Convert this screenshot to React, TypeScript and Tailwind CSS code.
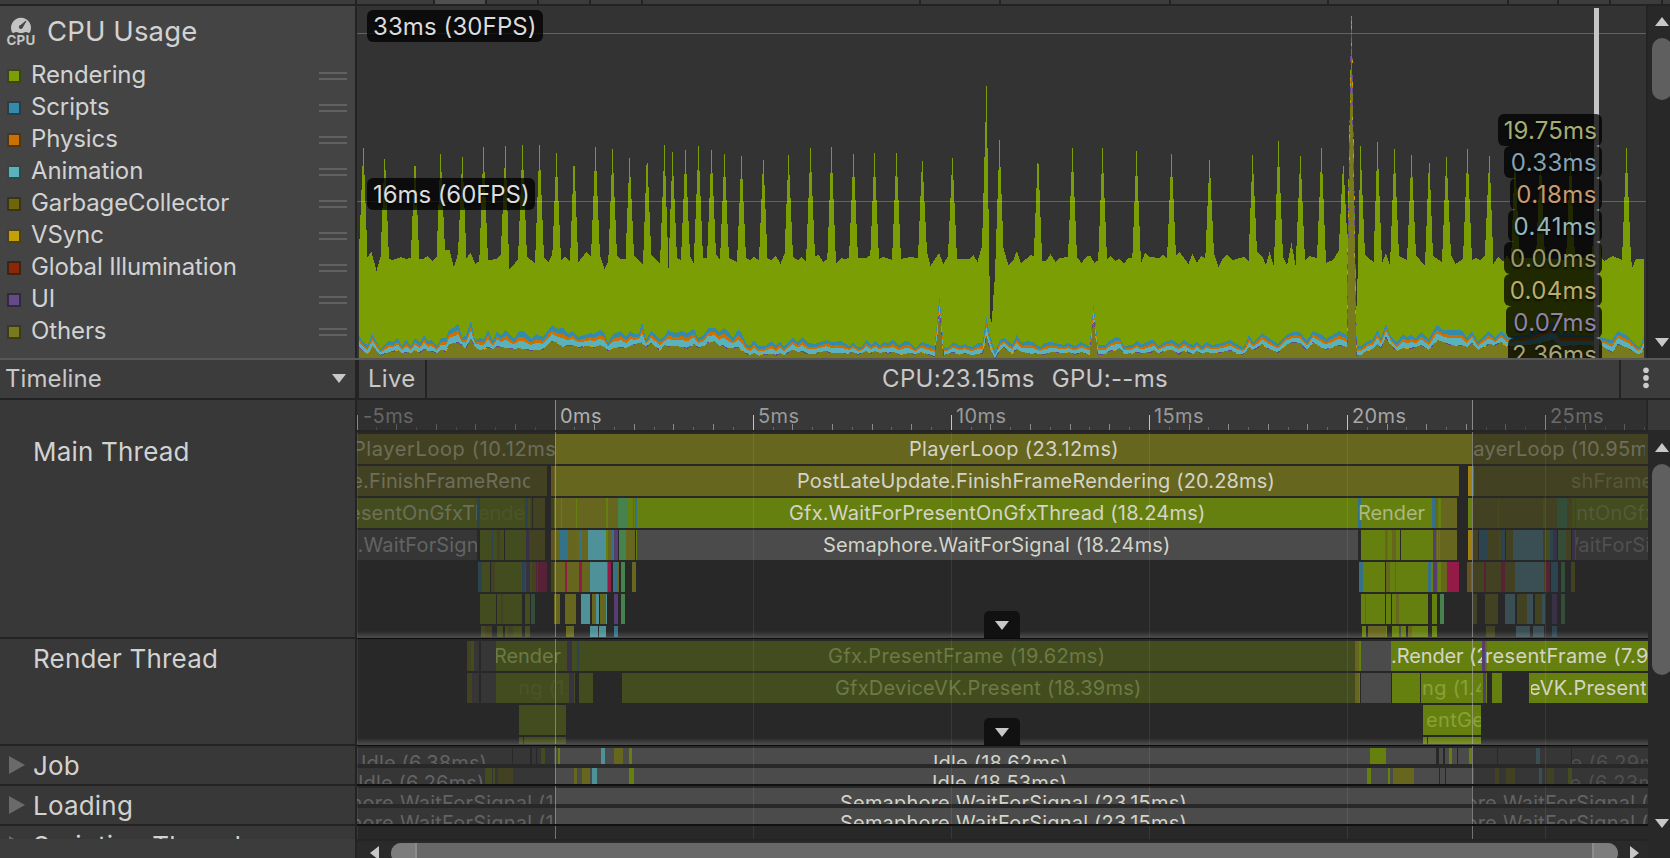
import React from "react";

const FONT = "font-['Inter','Liberation_Sans',sans-serif]";

/* ---------- Palette ---------- */

const FILL: Record<string, string> = {
  o: "bg-[#66661f]",
  O: "bg-[#424222]",
  g: "bg-[#66800f]",
  G: "bg-[#434c1e]",
  s: "bg-[#4b4b4b]",
  S: "bg-[#363636]",
  b: "bg-[#337288]",
  B: "bg-[#2b444f]",
  c: "bg-[#4f9198]",
  C: "bg-[#3a4f54]",
  p: "bg-[#563f70]",
  P: "bg-[#393146]",
  t: "bg-[#46824d]",
  T: "bg-[#344d38]",
  m: "bg-[#941b48]",
  M: "bg-[#582236]",
  y: "bg-[#a0810f]",
  n: "bg-[#665220]",
  k: "bg-[#282828]",
};

const TONE: Record<string, string> = {
  bright: "text-[#d4d4c8]",
  mid: "text-[#aab880]",
  dim: "text-[#6e6e5a]",
  dimGray: "text-[#636363]",
  olive: "text-[#6c7a44]",
  soft: "text-[#8aa03c]",
  faint: "text-[#57583c]",
  faintGray: "text-[#505050]",
  ghost: "text-[#4b5427]",
};

const TRACK: Record<string, string> = {
  none: "tracking-[-0.1px]",
  tight: "tracking-[0.15px]",
  snug: "tracking-[0.2px]",
  normal: "tracking-[0.34px]",
  wide: "tracking-[0.6px]",
};

type Bar = [number, number, string];
type Label = { x: number; from: number; to: number; text: string; tone: string; track?: string };
type LaneData = { bars: Bar[]; labels?: Label[] };

/* ---------- Timeline data ---------- */

const LEFT = 357;

const mainLanes: LaneData[] = [
  {
    bars: [[357, 555, "O"], [555, 1472, "o"], [1472, 1648, "O"]],
    labels: [
      { x: 353, from: 357, to: 555, text: "PlayerLoop (10.12ms)", tone: "dim", track: "wide" },
      { x: 909, from: 555, to: 1472, text: "PlayerLoop (23.12ms)", tone: "bright" },
      { x: 1455, from: 1472, to: 1645, text: "PlayerLoop (10.95ms)", tone: "dim" },
    ],
  },
  {
    bars: [[357, 547, "O"], [551, 554, "n"], [554, 1459, "o"], [1468, 1472, "y"], [1472, 1474, "b"], [1474, 1648, "O"]],
    labels: [
      { x: 210, from: 357, to: 530, text: "PostLateUpdate.FinishFrameRendering (8.63ms)", tone: "dim", track: "tight" },
      { x: 797, from: 555, to: 1459, text: "PostLateUpdate.FinishFrameRendering (20.28ms)", tone: "bright", track: "tight" },
      { x: 1378, from: 1571, to: 1648, text: "PostLateUpdate.FinishFrameRendering (9.10ms)", tone: "faint", track: "tight" },
    ],
  },
  {
    bars: [
      [357, 477, "G"], [477, 480, "B"], [480, 525, "G"], [525, 528, "B"], [528, 530, "G"], [530, 532, "O"],
      [533, 545, "O"], [551, 554, "O"], [554, 618, "o"], [561, 562, "t"], [576, 577, "g"], [606, 608, "g"],
      [618, 627, "t"], [627, 635, "g"], [633, 634, "o"], [635, 636, "o"], [636, 637, "b"], [637, 1358, "g"],
      [1358, 1361, "b"], [1361, 1432, "g"], [1432, 1435, "b"], [1435, 1438, "o"], [1438, 1441, "g"],
      [1441, 1457, "o"], [1468, 1472, "g"], [1472, 1557, "O"], [1498, 1499, "G"], [1505, 1506, "B"], [1543, 1545, "G"],
      [1557, 1567, "T"], [1567, 1572, "O"], [1572, 1648, "G"], [1575, 1576, "B"],
    ],
    labels: [
      { x: 216, from: 357, to: 477, text: "Gfx.WaitForPresentOnGfxThread (6.40ms)", tone: "dim", track: "tight" },
      { x: 478, from: 480, to: 525, text: "ender", tone: "ghost", track: "none" },
      { x: 789, from: 637, to: 1358, text: "Gfx.WaitForPresentOnGfxThread (18.24ms)", tone: "bright", track: "snug" },
      { x: 1358, from: 1358, to: 1432, text: "Render", tone: "mid", track: "none" },
      { x: 1408, from: 1575, to: 1648, text: "Gfx.WaitForPresentOnGfxThread (7.20ms)", tone: "faint", track: "snug" },
    ],
  },
  {
    bars: [
      [357, 477, "S"], [480, 504, "G"], [492, 493, "B"], [497, 500, "O"], [505, 526, "G"], [526, 529, "P"],
      [529, 545, "O"], [551, 554, "n"], [554, 635, "o"], [560, 568, "b"], [577, 578, "b"], [579, 582, "b"],
      [588, 606, "c"], [606, 608, "g"], [611, 614, "b"], [614, 618, "p"], [618, 619, "k"], [619, 626, "t"],
      [636, 637, "g"], [637, 1358, "s"], [1361, 1385, "g"], [1385, 1387, "o"], [1387, 1388, "b"], [1388, 1400, "g"],
      [1392, 1396, "o"], [1401, 1433, "g"], [1433, 1436, "p"], [1436, 1457, "o"], [1437, 1438, "g"], [1439, 1440, "g"],
      [1468, 1472, "y"], [1472, 1478, "O"], [1479, 1487, "B"], [1487, 1501, "O"], [1499, 1500, "G"], [1501, 1505, "B"],
      [1506, 1513, "O"], [1513, 1543, "C"], [1543, 1545, "O"], [1545, 1550, "G"], [1550, 1553, "B"], [1553, 1557, "P"],
      [1558, 1566, "T"], [1566, 1571, "O"], [1572, 1575, "P"], [1575, 1576, "G"], [1576, 1648, "S"],
    ],
    labels: [
      { x: 248, from: 357, to: 477, text: "Semaphore.WaitForSignal (6.40ms)", tone: "dimGray", track: "tight" },
      { x: 823, from: 637, to: 1358, text: "Semaphore.WaitForSignal (18.24ms)", tone: "bright", track: "tight" },
      { x: 1444, from: 1576, to: 1648, text: "Semaphore.WaitForSignal (7.20ms)", tone: "faintGray", track: "tight" },
    ],
  },
  {
    bars: [
      [478, 482, "B"], [482, 490, "G"], [491, 495, "O"], [495, 522, "G"], [522, 525, "B"], [525, 532, "G"],
      [526, 530, "P"], [532, 536, "O"], [536, 547, "M"], [537, 538, "O"], [551, 554, "O"], [554, 590, "o"],
      [565, 567, "m"], [579, 582, "m"], [590, 607, "c"], [607, 608, "o"], [608, 611, "m"], [613, 618, "b"],
      [618, 619, "o"], [621, 625, "t"], [632, 636, "o"], [1359, 1363, "b"], [1363, 1385, "g"], [1386, 1390, "o"],
      [1390, 1428, "g"], [1395, 1396, "o"], [1428, 1431, "b"], [1431, 1433, "g"], [1433, 1437, "p"], [1437, 1438, "b"],
      [1438, 1441, "g"], [1441, 1447, "o"], [1447, 1459, "m"], [1467, 1471, "n"], [1471, 1472, "b"], [1473, 1515, "O"],
      [1484, 1486, "M"], [1501, 1505, "M"], [1515, 1544, "C"], [1544, 1546, "O"], [1546, 1550, "M"], [1551, 1557, "B"],
      [1557, 1558, "O"], [1561, 1565, "T"], [1571, 1575, "O"],
    ],
  },
  {
    bars: [
      [480, 496, "G"], [497, 522, "G"], [501, 503, "O"], [525, 530, "G"], [531, 535, "T"], [554, 560, "o"],
      [565, 576, "o"], [581, 590, "c"], [592, 596, "o"], [596, 599, "c"], [600, 606, "o"], [606, 607, "c"],
      [614, 618, "p"], [621, 625, "t"], [1361, 1385, "g"], [1365, 1366, "o"], [1386, 1391, "g"], [1392, 1428, "g"],
      [1396, 1399, "o"], [1432, 1437, "g"], [1440, 1444, "t"], [1473, 1477, "O"], [1485, 1498, "O"], [1505, 1515, "C"],
      [1517, 1527, "O"], [1527, 1533, "C"], [1535, 1542, "O"], [1542, 1545, "C"], [1552, 1557, "P"], [1561, 1565, "T"],
    ],
  },
  {
    bars: [
      [481, 485, "G"], [485, 492, "O"], [497, 503, "G"], [505, 522, "G"], [508, 513, "O"], [525, 530, "G"],
      [566, 574, "o"], [590, 598, "c"], [599, 606, "c"], [614, 618, "b"], [1362, 1366, "g"], [1368, 1386, "o"],
      [1386, 1387, "g"], [1392, 1399, "g"], [1399, 1401, "s"], [1401, 1406, "g"], [1408, 1412, "o"], [1412, 1428, "g"],
      [1432, 1437, "g"], [1486, 1495, "O"], [1516, 1530, "C"], [1533, 1544, "C"], [1552, 1557, "B"],
    ],
  },
];

const renderLanes: LaneData[] = [
  {
    bars: [
      [467, 471, "O"], [471, 474, "G"], [474, 479, "S"], [481, 496, "S"], [496, 567, "G"], [567, 572, "P"],
      [572, 577, "G"], [577, 579, "B"], [579, 1355, "G"], [1355, 1359, "o"], [1359, 1361, "g"], [1361, 1391, "s"],
      [1391, 1482, "g"], [1482, 1485, "p"], [1485, 1487, "o"], [1487, 1648, "g"],
    ],
    labels: [
      { x: 494, from: 496, to: 567, text: "Render", tone: "olive", track: "none" },
      { x: 828, from: 579, to: 1355, text: "Gfx.PresentFrame (19.62ms)", tone: "olive" },
      { x: 1391, from: 1391, to: 1482, text: ".Render (2", tone: "bright", track: "none" },
      { x: 1485, from: 1485, to: 1648, text: "resentFrame (7.95ms)", tone: "bright" },
    ],
  },
  {
    bars: [
      [467, 472, "O"], [472, 479, "S"], [481, 496, "S"], [496, 569, "G"], [569, 574, "P"], [574, 575, "G"],
      [579, 593, "G"], [622, 1355, "G"], [1355, 1359, "o"], [1359, 1360, "g"], [1361, 1391, "s"], [1392, 1420, "g"],
      [1421, 1483, "g"], [1483, 1486, "p"], [1486, 1487, "g"], [1492, 1502, "g"], [1529, 1648, "g"],
    ],
    labels: [
      { x: 518, from: 520, to: 567, text: "ng (1.4", tone: "ghost" },
      { x: 835, from: 622, to: 1355, text: "GfxDeviceVK.Present (18.39ms)", tone: "olive", track: "snug" },
      { x: 1422, from: 1423, to: 1481, text: "ng (1.48ms)", tone: "soft" },
      { x: 1529, from: 1531, to: 1646, text: "eVK.Present", tone: "bright", track: "snug" },
    ],
  },
  {
    bars: [[519, 566, "G"], [1423, 1481, "g"]],
    labels: [{ x: 1426, from: 1427, to: 1481, text: "entGeometry", tone: "soft" }],
  },
  { bars: [[519, 523, "G"], [524, 566, "G"], [1423, 1427, "g"], [1428, 1481, "g"]] },
];

const jobLanes: LaneData[] = [
  {
    bars: [
      [357, 512, "S"], [513, 530, "S"], [532, 536, "S"], [537, 554, "S"], [541, 545, "G"], [554, 1436, "s"],
      [558, 560, "g"], [601, 605, "c"], [614, 623, "o"], [629, 632, "g"], [1370, 1386, "g"], [1439, 1443, "s"],
      [1445, 1457, "s"], [1449, 1452, "g"], [1458, 1472, "s"], [1469, 1472, "g"], [1472, 1648, "S"], [1497, 1498, "k"],
      [1536, 1540, "C"], [1571, 1572, "k"],
    ],
    labels: [
      { x: 361, from: 357, to: 512, text: "Idle (6.38ms)", tone: "dimGray", track: "tight" },
      { x: 933, from: 632, to: 1370, text: "Idle (18.62ms)", tone: "bright", track: "snug" },
      { x: 1547, from: 1572, to: 1648, text: "Idle (6.29ms)", tone: "faintGray" },
    ],
  },
  {
    bars: [
      [357, 555, "S"], [485, 492, "G"], [493, 495, "G"], [498, 513, "O"], [555, 1474, "s"], [574, 577, "o"],
      [582, 590, "o"], [592, 597, "c"], [629, 634, "g"], [1367, 1371, "g"], [1388, 1390, "g"], [1393, 1414, "o"],
      [1439, 1440, "k"], [1445, 1446, "k"], [1474, 1648, "S"], [1495, 1499, "O"], [1506, 1515, "O"], [1539, 1542, "C"],
      [1547, 1554, "O"], [1568, 1572, "G"],
    ],
    labels: [
      { x: 358, from: 357, to: 485, text: "Idle (6.26ms)", tone: "dimGray", track: "tight" },
      { x: 932, from: 634, to: 1367, text: "Idle (18.53ms)", tone: "bright", track: "snug" },
      { x: 1546, from: 1570, to: 1648, text: "Idle (6.23ms)", tone: "faintGray" },
    ],
  },
];

const loadingLane: LaneData = {
  bars: [[357, 555, "S"], [555, 1472, "s"], [1472, 1648, "S"]],
  labels: [
    { x: 284, from: 357, to: 555, text: "Semaphore.WaitForSignal (10.15ms)", tone: "dimGray", track: "snug" },
    { x: 840, from: 555, to: 1472, text: "Semaphore.WaitForSignal (23.15ms)", tone: "bright", track: "snug" },
    { x: 1387, from: 1472, to: 1648, text: "Semaphore.WaitForSignal (10.98ms)", tone: "dimGray", track: "snug" },
  ],
};

const loadingLanes = [loadingLane, loadingLane];

/* ---------- Chart data ---------- */

const frameOutline: [number, number][] = [
  [359, 251], [363.4, 145], [367.5, 257], [371.5, 252], [376.5, 271], [380.5, 257], [384.8, 152], [389, 259], [393, 260], [401, 257],
  [406, 259], [410.8, 258], [415, 154], [419.3, 259], [423, 259], [427.5, 256], [432.5, 261], [436.5, 257], [440.6, 152], [445, 250],
  [449.5, 250], [453.7, 267], [458, 254], [462.4, 154], [466.5, 258], [470.5, 253], [475.5, 264], [479.3, 261], [483.5, 147], [488, 260],
  [497, 259], [500.7, 255], [505.5, 146], [509.3, 269], [513, 266], [518, 259], [522.5, 145], [527, 257], [535, 263], [539.5, 145],
  [544, 257], [548.5, 262], [552.3, 255], [556.5, 153], [561, 260], [565, 257], [570, 262], [574, 153], [578.3, 262], [586.5, 252],
  [591, 257], [595.5, 147], [600, 256], [604.5, 269], [608.3, 261], [612.5, 149], [617, 256], [621, 259], [625.5, 259], [629.6, 156],
  [634, 255], [643, 265], [647, 151], [651.3, 255], [660, 263], [664.5, 145], [668.5, 268], [672.5, 152], [677, 258], [681, 260],
  [685.5, 150], [690, 256], [693.7, 263], [698.5, 146], [703, 258], [707, 258], [711.5, 150], [716, 254], [720, 260], [724.5, 154],
  [729, 258], [737, 262], [741.5, 156], [746, 258], [750, 260], [754, 257], [759, 260], [763.3, 155], [767.5, 258], [771, 260],
  [776, 256], [780.5, 264], [784.5, 254], [788.6, 153], [793, 257], [798, 260], [801.5, 257], [806, 262], [810.5, 148], [815, 256],
  [819, 255], [823, 262], [827.3, 259], [831.5, 147], [836, 264], [841, 258], [845, 259], [849, 258], [853.5, 154], [858, 258],
  [866, 258], [870.3, 255], [874.5, 153], [879, 259], [883, 257], [892, 260], [896.5, 153], [901, 259], [910, 257], [918, 258],
  [922.2, 155], [927, 252], [930.5, 266], [939, 253], [943.5, 264], [948, 256], [952.4, 155], [957, 259], [970, 259], [973.5, 255],
  [977.5, 262], [982, 246], [986.5, 86], [989.3, 258], [990, 317], [991.8, 323], [993.5, 295], [995, 275], [999.5, 140], [1003.5, 248],
  [1006, 257], [1008.5, 265], [1013, 261], [1016.8, 251], [1021, 263], [1026, 259], [1030, 255], [1033.8, 256], [1038, 151], [1042.2, 261],
  [1046, 261], [1050.5, 254], [1055.5, 262], [1060, 258], [1068, 257], [1072.5, 148], [1077, 257], [1081.5, 263], [1087, 256], [1090.5, 256],
  [1094.5, 263], [1098.2, 260], [1102.5, 148], [1107, 259], [1111, 256], [1115, 261], [1119, 259], [1124, 264], [1128, 258], [1132.3, 258],
  [1136.5, 151], [1141, 263], [1145, 253], [1150, 257], [1159, 258], [1163, 255], [1167, 259], [1171.5, 154], [1176, 256], [1179.5, 252],
  [1188.5, 264], [1192.5, 254], [1197, 263], [1201, 256], [1205.3, 258], [1209.6, 158], [1214, 254], [1218.5, 267], [1223, 258], [1227, 255],
  [1233, 260], [1244, 257], [1248.5, 261], [1252.6, 153], [1257, 252], [1262, 256], [1266, 265], [1269.5, 252], [1273.8, 266], [1278.5, 141],
  [1283, 257], [1287, 265], [1291.5, 243], [1295.7, 266], [1300.4, 153], [1305, 260], [1309, 256], [1317, 258], [1321.5, 148], [1326, 263],
  [1333, 260], [1338.7, 251], [1343.2, 160], [1347.4, 240], [1351.5, 16], [1356, 300], [1356.8, 310], [1360.5, 146], [1365, 255], [1373.5, 262],
  [1377.5, 142], [1382, 263], [1386, 253], [1390, 265], [1394.5, 149], [1399, 256], [1407, 260], [1411.5, 155], [1416, 255], [1425, 266],
  [1429.2, 155], [1433, 256], [1442, 262], [1446.4, 154], [1451, 255], [1455.5, 264], [1463, 259], [1467.5, 149], [1472, 260], [1476, 258],
  [1480, 260], [1484.8, 256], [1489.4, 153], [1493.5, 264], [1498, 257], [1503, 262], [1507, 255], [1511, 262], [1515, 152], [1519.5, 258],
  [1536, 258], [1540.5, 152], [1545, 258], [1566, 260], [1570.5, 152], [1575, 258], [1592, 258], [1596.5, 152], [1601, 256], [1604, 261],
  [1613, 256], [1622, 260], [1626.5, 148], [1630.8, 254], [1632, 268], [1636, 259], [1644, 259],
];

/* x, top of Scripts, top of Others */
const lowerBands: [number, number, number][] = [
  [359, 335, 347], [362, 341, 350], [367.5, 345, 354], [372.5, 334, 346], [380.5, 349, 355], [389, 341, 352], [393, 342, 351],
  [398, 338, 350], [401.5, 346, 353], [406.5, 340, 352], [411, 346, 353], [415, 338, 350], [420, 343, 352], [424, 335, 349],
  [428, 341, 351], [432, 340, 351], [437, 346, 353], [441, 338, 350], [446, 338, 351], [449, 330, 344], [455, 327, 343],
  [458, 323, 342], [462, 337, 345], [466, 336, 348], [471, 321, 338], [475, 340, 347], [480, 338, 350], [484, 339, 349],
  [488, 330, 347], [493, 341, 349], [497, 331, 346], [501, 336, 347], [505.5, 330, 347], [514, 339, 349], [519, 331, 348],
  [523, 331, 349], [531, 339, 350], [536, 334, 350], [543, 337, 349], [552, 325, 341], [558, 329, 343], [563, 327, 347],
  [568, 334, 345], [573, 331, 345], [578, 337, 347], [590, 333, 346], [594, 334, 347], [600, 330, 345], [604, 332, 347],
  [608, 343, 350], [613, 334, 348], [621, 331, 347], [626, 337, 348], [630, 331, 346], [635, 334, 344], [639, 334, 343],
  [642, 322, 342], [646, 340, 347], [651, 331, 343], [660, 339, 350], [664, 337, 345], [668, 330, 346], [675, 333, 346],
  [682, 331, 347], [687, 333, 348], [694, 329, 344], [698, 338, 347], [704, 335, 346], [708, 328, 342], [715, 328, 341],
  [719, 332, 346], [723, 328, 345], [727, 330, 348], [733, 338, 348], [738, 330, 347], [742, 334, 350], [746, 344, 353],
  [750, 346, 355], [754, 340, 353], [758, 346, 355], [765, 346, 354], [772, 341, 354], [776, 346, 355], [780, 341, 353],
  [784, 347, 355], [790, 340, 351], [793, 338, 349], [798, 342, 352], [802, 337, 351], [808, 343, 354], [815, 344, 353],
  [826, 340, 351], [832, 342, 353], [841, 341, 353], [849, 346, 353], [853, 343, 352], [858, 347, 354], [862, 347, 353],
  [866, 340, 351], [871, 345, 353], [875, 341, 351], [880, 345, 353], [884, 342, 352], [888, 343, 353], [893, 340, 352],
  [899, 345, 354], [905, 341, 354], [909, 341, 353], [915, 348, 354], [922, 342, 352], [927, 344, 354], [934.5, 346, 356],
  [937, 322, 337], [939.4, 297, 312], [941.5, 318, 332], [943.5, 346, 355], [947, 348, 354], [953, 342, 352], [960, 346, 354],
  [965, 344, 353], [972, 347, 355], [978, 343, 354], [982.5, 343, 353], [986.5, 318, 336], [990, 335, 348], [995, 352, 358],
  [1000, 340, 350], [1004, 338, 347], [1008, 341, 351], [1012, 345, 353], [1016.7, 335, 349], [1022, 343, 352], [1027, 341, 353],
  [1033, 342, 353], [1040, 347, 354], [1045, 343, 354], [1051, 342, 352], [1064, 345, 353], [1068, 343, 352], [1075, 346, 354],
  [1081, 342, 352], [1089.5, 346, 354], [1091.5, 326, 338], [1093.6, 305, 318], [1095.5, 322, 334], [1098, 345, 354],
  [1105, 345, 354], [1111, 340, 350], [1116, 337, 350], [1120, 338, 348], [1124, 346, 354], [1132, 345, 353], [1137, 341, 352],
  [1141, 345, 353], [1151, 340, 352], [1154, 340, 350], [1158, 346, 353], [1167, 341, 350], [1172, 340, 350], [1179, 344, 354],
  [1184, 340, 350], [1190, 344, 353], [1193, 345, 354], [1197, 341, 351], [1202, 347, 354], [1206, 342, 352], [1212, 345, 353],
  [1222, 343, 352], [1230, 340, 350], [1237, 344, 353], [1242, 347, 354], [1245, 345, 353], [1249, 335, 347], [1253, 342, 350],
  [1257, 339, 348], [1262, 333, 344], [1269, 338, 349], [1278, 344, 352], [1286, 335, 345], [1293, 332, 342], [1300, 332, 343],
  [1307, 341, 350], [1313, 331, 342], [1322, 335, 348], [1326, 339, 349], [1339, 331, 345], [1347, 335, 347], [1347.6, 260, 270],
  [1351.5, 18, 24], [1356.2, 325, 336], [1356.8, 346, 355], [1361, 346, 355], [1368, 341, 350], [1373, 339, 349], [1377.5, 330, 344], [1381, 338, 348],
  [1386, 324, 337], [1391, 337, 345], [1397, 342, 351], [1403, 334, 348], [1407, 337, 348], [1411, 335, 348], [1416, 338, 347],
  [1421, 332, 345], [1429, 339, 350], [1433, 331, 345], [1437, 325, 340], [1443, 330, 342], [1452, 330, 345], [1462, 330, 345],
  [1467, 338, 347], [1472, 331, 343], [1478, 342, 350], [1483, 336, 347], [1489, 331, 344], [1495, 338, 345], [1501, 331, 342],
  [1507, 337, 346], [1530, 334, 345], [1553, 322, 340], [1560, 334, 346], [1590, 335, 345], [1600, 337, 345], [1612, 340, 352],
  [1618, 331, 344], [1628, 336, 348], [1638, 347, 354], [1641, 345, 353], [1644, 336, 348],
];

const CHART_TOP = 6;
const BASE = 352;

const area = (pts: [number, number][]) =>
  `${pts[0][0] - LEFT},${BASE} ` +
  pts.map(([x, y]) => `${x - LEFT},${y - CHART_TOP}`).join(" ") +
  ` ${pts[pts.length - 1][0] - LEFT},${BASE}`;

const band = (ratio: number) =>
  area(lowerBands.map(([x, a, b]) => [x, a + (b - a) * ratio] as [number, number]));

const edge = lowerBands.map(([x, , b]) => `${x - LEFT},${b - CHART_TOP + 0.3}`).join(" ");

/* ---------- Shared pieces ---------- */

function Triangle({ dir, className }: { dir: "up" | "down" | "left" | "right"; className?: string }) {
  if (dir === "up" || dir === "down") {
    return (
      <svg width="14" height="9" viewBox="0 0 14 9" className={className ?? "text-[#c8c8c8]"}>
        <path d={dir === "up" ? "M7 0L14 9H0Z" : "M0 0H14L7 9Z"} fill="currentColor" />
      </svg>
    );
  }
  return (
    <svg width="9" height="14" viewBox="0 0 9 14" className={className ?? "text-[#c8c8c8]"}>
      <path d={dir === "left" ? "M9 0V14L0 7Z" : "M0 0V14L9 7Z"} fill="currentColor" />
    </svg>
  );
}

/* ---------- CPU module ---------- */

const legend: [string, string][] = [
  ["Rendering", "bg-[#7c9e05] border-[#3b4516]"],
  ["Scripts", "bg-[#338aab] border-[#2a3c45]"],
  ["Physics", "bg-[#cc7000] border-[#4c3718]"],
  ["Animation", "bg-[#5ab2bc] border-[#324648]"],
  ["GarbageCollector", "bg-[#6f660b] border-[#383518]"],
  ["VSync", "bg-[#c4a008] border-[#4a4118]"],
  ["Global Illumination", "bg-[#8c2808] border-[#3c2418]"],
  ["UI", "bg-[#644a88] border-[#302b3b]"],
  ["Others", "bg-[#79791e] border-[#3a3a1c]"],
];

function CpuIcon() {
  return (
    <svg width="30" height="32" viewBox="0 0 30 32" className="overflow-visible text-[#c4c4c4]">
      <path
        d="M6 16.2A10 10 0 1 1 24 16.2Q23.4 17 22.6 17Q20 15.6 18 16.4Q15 17.6 12 16.4Q10 15.6 7.4 17Q6.6 17 6 16.2Z"
        fill="currentColor"
      />
      <path d="M13.5 10.5L20 5L16 12" fill="#444" stroke="#444" strokeWidth="1" strokeLinejoin="round" />
      <circle cx="14.8" cy="11" r="1.9" fill="#444" />
      <text x="15" y="28.6" textAnchor="middle" fontSize="13.4" fontWeight="700" letterSpacing="0.2" fill="currentColor" fontFamily="Inter, sans-serif">
        CPU
      </text>
    </svg>
  );
}

function Legend() {
  return (
    <div className="w-[355px] shrink-0 bg-[#444444]">
      <div className="flex h-[54px] items-start pt-[9px] pl-[6px]">
        <div className="pt-px">
          <CpuIcon />
        </div>
        <h1 className="ml-[11px] text-[27.5px] leading-[32px] tracking-[0.13px] text-[#d2d2d2]">CPU Usage</h1>
      </div>
      {legend.map(([name, swatch]) => (
        <div key={name} className="flex h-8 items-center pr-2 pl-[7px]">
          <span className={`h-[14px] w-[14px] border-2 ${swatch}`} />
          <span className="ml-[10px] -mt-[3px] text-[24px] leading-[32px] tracking-[-0.12px] text-[#d2d2d2]">{name}</span>
          <span className="ml-auto h-2 w-7 border-y-2 border-[#616161]" />
        </div>
      ))}
    </div>
  );
}

const readouts: [string, string][] = [
  ["19.75ms", "w-[104px] tracking-[0.15px] text-[#a5ad74]"],
  ["0.33ms", "w-[98px] tracking-[0.35px] text-[#84a4b6]"],
  ["0.18ms", "w-[92px] tracking-[0.5px] text-[#c69b70]"],
  ["0.41ms", "w-[94px] tracking-[0.6px] text-[#94b6bb]"],
  ["0.00ms", "w-[98px] tracking-[0.35px] text-[#9c9870]"],
  ["0.04ms", "w-[98px] tracking-[0.35px] text-[#bdac6e]"],
  ["0.07ms", "w-[96px] tracking-[0.35px] text-[#9182a8]"],
  ["2.36ms", "w-[94px] tracking-[0.1px] text-[#a4a478]"],
];

const BADGE = "h-8 rounded-[6px] bg-black/75 text-[24px] leading-[33px] whitespace-nowrap [text-shadow:0_2px_2px_rgba(0,0,0,.6)]";

function Chart() {
  return (
    <div className="relative h-[352px] w-[1289px] shrink-0 overflow-hidden bg-[#333333]">
      <svg width="1289" height="352" shapeRendering="crispEdges" className="block">
        <polygon points={area(frameOutline)} fill="#7c9e05" />
        <polygon points={band(0)} fill="#338aab" />
        <polygon points={band(0.33)} fill="#cc7000" />
        <polygon points={band(0.56)} fill="#5ab2bc" />
        <polygon points={band(1)} fill="#79791e" />
        <polyline points={edge} fill="none" stroke="#644a88" strokeWidth="1" strokeDasharray="5 9 3 14 7 6" />
        <polyline points={edge} fill="none" stroke="#c4a008" strokeWidth="1" strokeDasharray="3 19 4 31" strokeDashoffset="9" />
        <rect x="0" y="27" width="1289" height="1" fill="#fff" fillOpacity=".23" />
        <rect x="0" y="195" width="1289" height="1" fill="#fff" fillOpacity=".23" />
      </svg>
      <div className="absolute top-[2px] left-[1237px] h-[350px] w-[5px] bg-[#c6c6c6]" />
      <div className={`${BADGE} absolute top-1 left-[10px] w-[176px] pl-[6px] tracking-[0.1px] text-[#dcdcdc]`}>33ms (30FPS)</div>
      <div className={`${BADGE} absolute top-[172px] left-[10px] w-[168px] pl-[6px] tracking-[-0.08px] text-[#dcdcdc]`}>16ms (60FPS)</div>
      <div className="absolute top-[108px] right-[44px] flex flex-col items-end">
        {readouts.map(([value, look]) => (
          <div key={value} className={`${BADGE} shrink-0 pr-[5px] text-right ${look}`}>
            {value}
          </div>
        ))}
      </div>
    </div>
  );
}

function ModuleScrollbar() {
  return (
    <div className="flex w-[24px] shrink-0 flex-col items-start overflow-hidden border-l-2 border-[#232323] bg-[#282828] pl-[4px]">
      <Triangle dir="up" className="mt-[11px] ml-[3px] shrink-0 text-[#c8c8c8]" />
      <div className="mt-3 h-[62px] w-5 shrink-0 rounded-[10px] bg-[#5f5f5f]" />
      <Triangle dir="down" className="mt-[238px] ml-[3px] shrink-0 text-[#c8c8c8]" />
    </div>
  );
}

/* ---------- Timeline ---------- */

const GRID = [357, 753, 951, 1149, 1347, 1545];

function Guides() {
  return (
    <>
      {GRID.map((x) => (
        <span key={x} className="absolute inset-y-0 w-px bg-white/8" style={{ left: x - LEFT }} />
      ))}
      <span className="absolute inset-y-0 left-[198px] w-px bg-[#bbbbbb]/50" />
      <span className="absolute inset-y-0 left-[1115px] w-px bg-[#bbbbbb]/50" />
    </>
  );
}

function Lane({ lane, className }: { lane: LaneData; className: string }) {
  return (
    <div className={`relative shrink-0 overflow-hidden ${className}`}>
      {lane.bars.map(([from, to, fill], i) => (
        <span key={i} className={`absolute inset-y-0 ${FILL[fill]}`} style={{ left: from - LEFT, width: to - from }} />
      ))}
      {lane.labels?.map((l, i) => (
        <span key={i} className="absolute inset-y-0 overflow-hidden" style={{ left: l.from - LEFT, width: l.to - l.from }}>
          <span
            className={`block text-[20px] leading-[30px] whitespace-pre ${TRACK[l.track ?? "normal"]} ${TONE[l.tone]}`}
            style={{ marginLeft: l.x - l.from }}
          >
            {l.text}
          </span>
        </span>
      ))}
    </div>
  );
}

function Thread({ lanes, height, laneClass, foldable }: { lanes: LaneData[]; height: string; laneClass: string; foldable?: boolean }) {
  return (
    <div className={`relative flex w-full shrink-0 flex-col overflow-hidden bg-[#282828] pt-[2px] ${height} ${foldable ? "" : "border-b-2 border-[#111111]"}`}>
      {lanes.map((lane, i) => (
        <Lane key={i} lane={lane} className={laneClass} />
      ))}
      <Guides />
      {foldable && (
        <>
          <div className="absolute inset-x-0 bottom-[2px] h-[6px] bg-gradient-to-b from-white/0 to-white/15" />
          <div className="absolute inset-x-0 bottom-0 h-[2px] border-t border-[#4a4a4a] bg-[#0c0c0c]" />
          <div className="absolute bottom-px left-[627px] flex h-[27px] w-9 justify-center rounded-t-[5px] bg-[#111111] pt-[10px]">
            <Triangle dir="down" />
          </div>
        </>
      )}
    </div>
  );
}

const rulerLabels: [string, number, string][] = [
  ["-5ms", 363, "text-[#666666]"],
  ["0ms", 560, "text-[#b0b0b0]"],
  ["5ms", 758, "text-[#9a9a9a]"],
  ["10ms", 956, "text-[#9a9a9a]"],
  ["15ms", 1154, "text-[#9a9a9a]"],
  ["20ms", 1352, "text-[#a6a6a6]"],
  ["25ms", 1550, "text-[#6a6a6a]"],
];

function Ruler() {
  const ticks = Array.from({ length: 66 }, (_, i) => i);
  return (
    <div className="relative h-8 w-[1291px] shrink-0 overflow-hidden border-b-2 border-[#252525] bg-[#383838]">
      <div className="absolute inset-y-0 left-0 w-[198px] bg-[#303030]" />
      <div className="absolute inset-y-0 right-0 w-[176px] bg-[#303030]" />
      <svg width="1291" height="31" shapeRendering="crispEdges" className="absolute top-0 left-0">
        {ticks.map((i) => {
          const major = i % 10 === 0;
          const whole = i % 2 === 0;
          const x = Math.floor(i * 19.81);
          const inside = x >= 198 && x <= 1115;
          const top = major ? 15 : whole ? 24 : 27;
          const ink = major ? (inside ? "#c4c4c4" : "#868686") : whole ? (inside ? "#8a8a8a" : "#5c5c5c") : inside ? "#666" : "#484848";
          return <rect key={i} x={x} y={top} width="1" height={31 - top} fill={ink} />;
        })}
      </svg>
      <span className="absolute inset-y-0 left-[198px] w-px bg-[#8a8a8a]" />
      <span className="absolute inset-y-0 left-[1115px] w-px bg-[#8a8a8a]" />
      {rulerLabels.map(([text, x, look]) => (
        <span key={text} className={`absolute top-0 text-[20px] leading-8 tracking-[0.4px] ${look}`} style={{ left: x - LEFT }}>
          {text}
        </span>
      ))}
      <span className="absolute inset-y-0 right-0 w-[2px] bg-[#262626]" />
    </div>
  );
}

function ThreadName({ name, height, group }: { name: string; height: string; group?: boolean }) {
  return (
    <div className={`flex shrink-0 items-start border-b-2 border-[#232323] ${height}`}>
      <span className="flex h-10 w-[33px] shrink-0 items-center pl-[9px]">
        {group && (
          <svg width="16" height="18" viewBox="0 0 16 18" className="-mt-[2px] shrink-0">
            <path d="M0 0L16 9L0 18Z" fill="#6a6a6a" />
          </svg>
        )}
      </span>
      <span className="text-[26px] leading-[39px] tracking-[0.2px] whitespace-nowrap text-[#d2d2d2]">{name}</span>
    </div>
  );
}

function Toolbar() {
  return (
    <div className="flex h-[40px] shrink-0 border-b-2 border-[#232323] bg-[#3c3c3c] text-[24px] leading-[37px] tracking-[0.3px] text-[#c8c8c8]">
      <div className="flex w-[355px] shrink-0 justify-between pr-[9px] pl-[5px]">
        <span className="tracking-[0.08px]">Timeline</span>
        <Triangle dir="down" className="mt-[14px] text-[#c8c8c8]" />
      </div>
      <div className="w-[4px] shrink-0 bg-[#232323]" />
      <div className="w-[68px] shrink-0 border-r-2 border-[#232323] pl-[9px]">Live</div>
      <div className="flex grow justify-center pl-[4px] whitespace-pre [word-spacing:-1.4px]">CPU:23.15ms   GPU:--ms</div>
      <div className="flex w-[51px] shrink-0 border-l-2 border-[#232323] pt-[6px] pl-[21px]">
        <svg width="8" height="24" viewBox="0 0 8 24" fill="#cccccc">
          <circle cx="4" cy="4.3" r="2.8" />
          <circle cx="4" cy="11.9" r="2.8" />
          <circle cx="4" cy="19.5" r="2.8" />
        </svg>
      </div>
    </div>
  );
}

const topCells = [
  "w-[355px]", "w-[76px]", "w-[50px] bg-[#4f4f4f]", "w-[50px]", "w-[50px]", "w-[50px]", "w-[276px]", "w-[78px]", "w-[168px]",
  "w-[156px]", "w-[178px]", "w-[48px]", "w-[50px]", "w-[50px]", "w-[8px]",
];

export default function App() {
  return (
    <div className={`flex h-[858px] w-[1670px] flex-col overflow-hidden bg-[#383838] ${FONT}`}>
      <div className="flex h-[6px] shrink-0 gap-[2px] overflow-hidden border-b-2 border-[#232323] bg-[#232323]">
        {topCells.map((cell, i) => (
          <div key={i} className={`h-1 shrink-0 ${cell.includes("bg-") ? "" : "bg-[#3c3c3c]"} ${cell}`} />
        ))}
      </div>

      <div className="flex h-[352px] shrink-0">
        <Legend />
        <div className="w-[2px] shrink-0 bg-[#232323]" />
        <Chart />
        <ModuleScrollbar />
      </div>
      <div className="h-[2px] shrink-0 bg-[#585858]" />

      <Toolbar />

      <div className="flex h-[458px] shrink-0">
        <div className="flex w-[355px] shrink-0 flex-col">
          <div className="h-8 shrink-0" />
          <div className="flex h-[407px] shrink-0 flex-col overflow-hidden">
            <ThreadName name="Main Thread" height="h-[207px]" />
            <ThreadName name="Render Thread" height="h-[107px]" />
            <ThreadName name="Job" height="h-[40px]" group />
            <ThreadName name="Loading" height="h-[40px]" group />
            <ThreadName name="Scripting Threads" height="h-[40px]" group />
          </div>
          <div className="grow bg-[#3c3c3c]" />
        </div>
        <div className="w-[2px] shrink-0 bg-[#232323]" />
        <div className="flex w-[1291px] shrink-0 flex-col">
          <Ruler />
          <div className="flex h-[407px] shrink-0 flex-col overflow-hidden">
            <Thread lanes={mainLanes} height="h-[207px]" laneClass="h-[30px] mb-[2px]" foldable />
            <Thread lanes={renderLanes} height="h-[107px]" laneClass="h-[30px] mb-[2px]" foldable />
            <Thread lanes={jobLanes} height="h-[40px]" laneClass="h-4 mb-1" />
            <Thread lanes={loadingLanes} height="h-[40px]" laneClass="h-4 mb-1" />
            <Thread lanes={[]} height="h-[40px]" laneClass="h-4" />
          </div>
          <div className="flex h-[19px] shrink-0 items-start overflow-hidden border-t-2 border-[#242424] bg-[#2a2a2a]">
            <Triangle dir="left" className="mt-[5px] ml-[13px] shrink-0 text-[#c8c8c8]" />
            <div className="mt-[2px] ml-3 flex h-5 w-[1227px] shrink-0 justify-between overflow-hidden rounded-[10px] bg-[#686868]">
              <span className="w-[26px] border-r-2 border-[#8c8c8c] bg-[#7d7d7d]" />
              <span className="w-[26px] border-l-2 border-[#8c8c8c] bg-[#7d7d7d]" />
            </div>
            <Triangle dir="right" className="mt-[5px] ml-3 shrink-0 text-[#c8c8c8]" />
          </div>
        </div>
        <div className="flex w-[22px] shrink-0 flex-col items-start overflow-hidden bg-[#282828] pl-[4px]">
          <div className="-ml-[4px] h-[30px] w-[22px] shrink-0 bg-[#383838]" />
          <Triangle dir="up" className="mt-[13px] ml-[3px] shrink-0 text-[#c8c8c8]" />
          <div className="mt-3 h-[211px] w-5 shrink-0 rounded-[10px] bg-[#5f5f5f]" />
          <Triangle dir="down" className="mt-[144px] ml-[3px] shrink-0 text-[#c8c8c8]" />
        </div>
      </div>
    </div>
  );
}
